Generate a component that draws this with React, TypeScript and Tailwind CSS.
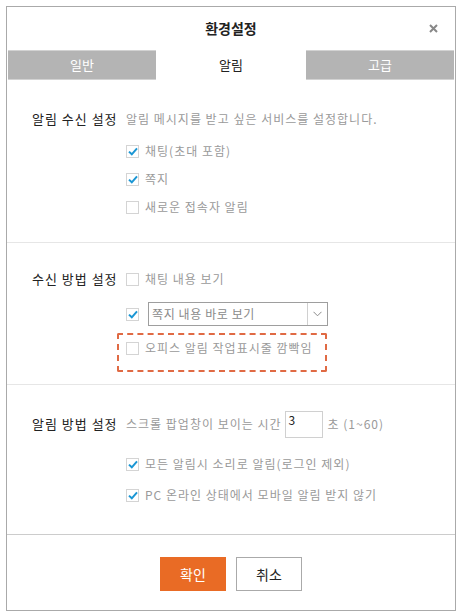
import { ReactNode } from "react";

const font = { fontFamily: '"Noto Sans CJK KR", "Noto Sans", sans-serif' };

function Check({ checked }: { checked?: boolean }) {
  return (
    <span className="w-[13px] h-[13px] shrink-0 border border-[#d4d4d4] bg-white flex items-center justify-center">
      {checked && (
        <svg width="10" height="9" viewBox="0 0 10 9">
          <path d="M1 4.6 L3.8 7.3 L9 1.4" fill="none" stroke="#1a96d4" strokeWidth="2" />
        </svg>
      )}
    </span>
  );
}

function CheckRow({ checked, label, className = "" }: { checked?: boolean; label: string; className?: string }) {
  return (
    <div className={`h-[28px] flex items-center ${className}`}>
      <Check checked={checked} />
      <span className="ml-[6px] text-[12px] tracking-[1px] text-[#9a9a9a]">{label}</span>
    </div>
  );
}

function Section({ label, children, className = "" }: { label: string; children: ReactNode; className?: string }) {
  return (
    <div className={`flex pl-[25px] ${className}`}>
      <div className="w-[94px] h-[28px] flex items-center text-[13px] tracking-[1px] text-[#222]">{label}</div>
      <div className="flex flex-col">{children}</div>
    </div>
  );
}

export default function App() {
  return (
    <div className="w-[462px] h-[615px] bg-white pt-[6px] pl-[6px]" style={font}>
      <div className="w-[450px] h-[605px] border border-[#aaaaaa] flex flex-col">
        <div className="h-[43px] relative flex items-center justify-center">
          <span className="text-[14px] font-bold text-[#222]">환경설정</span>
          <svg className="absolute right-[17px] top-[17px]" width="9" height="9" viewBox="0 0 9 9">
            <path d="M1 1 L8 8 M8 1 L1 8" stroke="#888" strokeWidth="2" />
          </svg>
        </div>

        <div className="h-[30px] px-[1px] flex">
          <div className="w-[148px] bg-[#b4b4b4] border-y border-[#d2d2d2] flex items-center justify-center text-[13px] text-white">
            일반
          </div>
          <div className="w-[150px] bg-white flex items-center justify-center text-[13px] text-[#222]">알림</div>
          <div className="w-[148px] bg-[#b4b4b4] border-y border-[#d2d2d2] flex items-center justify-center text-[13px] text-white">
            고급
          </div>
        </div>

        <Section label="알림 수신 설정" className="h-[163px] pt-[25px] border-b border-[#e6e6e6]">
          <div className="h-[28px] flex items-center text-[12px] tracking-[1px] text-[#9a9a9a]">
            알림 메시지를 받고 싶은 서비스를 설정합니다.
          </div>
          <CheckRow checked label="채팅(초대 포함)" className="mt-[4px]" />
          <CheckRow checked label="쪽지" />
          <CheckRow label="새로운 접속자 알림" />
        </Section>

        <Section label="수신 방법 설정" className="h-[142px] pt-[22px] border-b border-[#e6e6e6]">
          <CheckRow label="채팅 내용 보기" />
          <div className="h-[24px] mt-[9px] flex items-center">
            <Check checked />
            <div className="ml-[9px] w-[180px] h-[24px] border border-[#9e9e9e] flex items-center">
              <span className="flex-1 pl-[3px] text-[12px] tracking-[0.6px] text-[#8a8a8a]">쪽지 내용 바로 보기</span>
              <span className="w-[20px] h-full border-l border-[#d0d0d0] flex items-center justify-center">
                <svg width="9" height="6" viewBox="0 0 9 6">
                  <path d="M0.5 0.8 L4.5 4.8 L8.5 0.8" fill="none" stroke="#8a8a8a" strokeWidth="1" />
                </svg>
              </span>
            </div>
          </div>
          <div className="mt-[7px] -ml-[9px] w-[210px] h-[39px] border-2 border-dashed border-[#e06a44] rounded-[2px] pl-[7px] pt-[3px]">
            <CheckRow label="오피스 알림 작업표시줄 깜빡임" className="!h-[20px]" />
          </div>
        </Section>

        <Section label="알림 방법 설정" className="h-[150px] pt-[25px] border-b border-[#cccccc]">
          <div className="h-[28px] flex items-center text-[12px] tracking-[1px] text-[#9a9a9a]">
            <span>스크롤 팝업창이 보이는 시간</span>
            <span className="ml-[3px] w-[38px] h-[27px] border border-[#d0d0d0] text-[12px] text-[#222] pl-[3px] leading-[16px]">
              3
            </span>
            <span className="ml-[5px]">초 (1~60)</span>
          </div>
          <CheckRow checked label="모든 알림시 소리로 알림(로그인 제외)" className="mt-[12px]" />
          <CheckRow checked label="PC 온라인 상태에서 모바일 알림 받지 않기" className="mt-[3px]" />
        </Section>

        <div className="flex-1 flex justify-center gap-[10px] pt-[22px]">
          <button className="w-[66px] h-[34px] bg-[#e96b25] text-white text-[14px]">확인</button>
          <button className="w-[66px] h-[34px] border border-[#aaaaaa] bg-white text-[#222] text-[14px]">취소</button>
        </div>
      </div>
    </div>
  );
}
